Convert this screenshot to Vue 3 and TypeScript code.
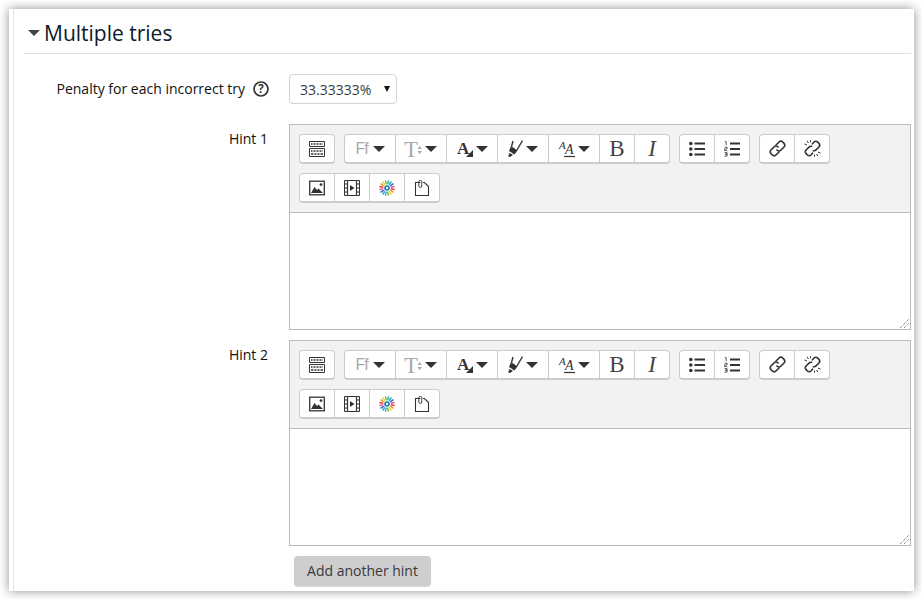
<script setup lang="ts">
const hints = [1, 2]

// toolbar rows: each group is a list of icon names
const rows: string[][][] = [
  [
    ['collapse'],
    ['font', 'size', 'color', 'marker', 'style', 'bold', 'italic'],
    ['ul', 'ol'],
    ['link', 'unlink'],
  ],
  [['image', 'video', 'burst', 'paste']],
]

const wide = ['font', 'size', 'color', 'marker', 'style']

// rays of the coloured wheel
const rayColors = ['#e8413c', '#f39c2d', '#f4d03f', '#7cc242', '#2fb7a5', '#29a9e0', '#2b6cc4', '#e85a9b']
const rays = Array.from({ length: 16 }, (_, i) => {
  const a = (i * Math.PI) / 8 + 0.2
  return {
    x1: 8 + Math.cos(a) * 3.8,
    y1: 8 + Math.sin(a) * 3.8,
    x2: 8 + Math.cos(a) * 7.8,
    y2: 8 + Math.sin(a) * 7.8,
    color: rayColors[i % rayColors.length],
  }
})
</script>

<template>
  <div class="frame">
    <div class="inner">
      <div class="section-head">
        <span class="collapse-caret"></span>
        <h3>Multiple tries</h3>
      </div>

      <div class="form-row penalty">
        <div class="label">
          <span>Penalty for each incorrect try</span>
          <svg class="help" viewBox="0 0 16 16" width="16" height="16">
            <circle cx="8" cy="8" r="7" fill="none" stroke="#333" stroke-width="1.7" />
            <text x="8" y="12.2" text-anchor="middle" font-size="11.500" font-weight="700" fill="#333" font-family="Open Sans, sans-serif">?</text>
          </svg>
        </div>
        <div class="select">
          <span>33.33333%</span>
          <i class="select-arrow"></i>
        </div>
      </div>

      <div v-for="n in hints" :key="n" class="form-row hint">
        <div class="label">Hint {{ n }}</div>
        <div class="editor">
          <div class="toolbar">
            <div v-for="(row, r) in rows" :key="r" class="tool-row">
              <div v-for="(group, g) in row" :key="g" class="tool-group">
                <div v-for="icon in group" :key="icon" class="tool" :class="{ wide: wide.includes(icon) }">
                  <svg v-if="icon === 'collapse'" viewBox="0 0 16 16" width="16" height="16">
                    <path d="M.5.5h15v5H.5zM.5 7.500h15v8H.5z" fill="none" stroke="#333" />
                    <path d="M2 2.200h12v1.600H2zM2 9.200h12v1.600H2zM2 12.200h12v1.600H2z" fill="#333" />
                    <path d="M4 2v2M7 2v2M10 2v2M13 2v2M4 9v2M7 9v2M10 9v2M13 9v2M5 12v2M8 12v2M11 12v2" stroke="#fff" />
                  </svg>
                  <span v-else-if="icon === 'font'" class="ff">Ff</span>
                  <svg v-else-if="icon === 'size'" class="free" viewBox="0 0 18 24" width="18" height="24">
                    <text x="-1" y="19.500" font-size="23" fill="#aaa" font-family="Liberation Serif, serif">T</text>
                    <path d="M12.500 12l2.200-3 2.200 3zM12.500 14l2.200 3 2.200-3z" fill="#aaa" />
                  </svg>
                  <svg v-else-if="icon === 'color'" class="free" viewBox="0 0 17 22" width="17" height="22">
                    <text x="0" y="16" font-size="17" font-weight="700" fill="#333" font-family="Liberation Serif, serif">A</text>
                    <path d="M16 12v7H9z" fill="#333" />
                  </svg>
                  <svg v-else-if="icon === 'marker'" viewBox="0 0 16 18" width="16" height="18">
                    <path d="M5 1L3.500 6.500M14.500 .5L9 10" stroke="#333" stroke-width="1.400" fill="none" />
                    <path d="M3 6l6.500 4.500-3 4-5.500-3.500z" fill="#333" />
                    <path d="M1.500 13l3.500 1.800-2.500 2H0z" fill="#333" />
                  </svg>
                  <svg v-else-if="icon === 'style'" class="free" viewBox="0 0 17 22" width="17" height="22">
                    <text x="0" y="11" font-size="11" fill="#333" font-style="italic" font-family="Liberation Serif, serif">A</text>
                    <text x="6" y="16" font-size="14" fill="#333" font-style="italic" font-family="Liberation Serif, serif">A</text>
                    <path d="M5 18.500h11" stroke="#333" stroke-width="1.200" />
                  </svg>
                  <span v-else-if="icon === 'bold'" class="letter">B</span>
                  <span v-else-if="icon === 'italic'" class="letter em">I</span>
                  <svg v-else-if="icon === 'ul'" viewBox="0 0 16 16" width="16" height="16">
                    <circle cx="1.800" cy="2.500" r="1.800" fill="#333" />
                    <circle cx="1.800" cy="8" r="1.800" fill="#333" />
                    <circle cx="1.800" cy="13.500" r="1.800" fill="#333" />
                    <path d="M5.500 2.500H16M5.500 8H16M5.500 13.500H16" stroke="#333" stroke-width="2" />
                  </svg>
                  <svg v-else-if="icon === 'ol'" viewBox="0 0 16 16" width="16" height="16">
                    <path d="M6 2.500h10M6 8h10M6 13.500h10" stroke="#333" stroke-width="2" />
                    <path d="M.8.600h1.400v3.600M.5 6.200h2.600v1.700H.6v1.700h2.600M.5 11.600h2.600v1.600H1.200h1.900v1.900H.5" stroke="#333" fill="none" stroke-width=".8" />
                  </svg>
                  <svg v-else-if="icon === 'link'" viewBox="0 0 17 17" width="17" height="17">
                    <g fill="none" stroke="#333" stroke-width="1.600" stroke-linecap="round">
                      <path d="M7 5l2.800-2.800a2.900 2.900 0 0 1 4.100 0l.9.900a2.900 2.900 0 0 1 0 4.100L12 10a2.900 2.900 0 0 1-4.100 0" />
                      <path d="M10 12l-2.800 2.800a2.900 2.900 0 0 1-4.100 0l-.9-.9a2.900 2.900 0 0 1 0-4.100L5 7a2.900 2.900 0 0 1 4.100 0" />
                    </g>
                  </svg>
                  <svg v-else-if="icon === 'unlink'" viewBox="0 0 17 17" width="17" height="17">
                    <g fill="none" stroke="#333" stroke-width="1.600" stroke-linecap="round">
                      <path d="M8.500 3.800l1.300-1.500a2.900 2.900 0 0 1 4.100 0l.8.800a2.900 2.900 0 0 1 0 4.100L12 9.900a2.900 2.900 0 0 1-2.600.8" />
                      <path d="M8.500 13.200l-1.300 1.500a2.900 2.900 0 0 1-4.100 0l-.8-.8a2.900 2.900 0 0 1 0-4.100L5 7.100a2.900 2.900 0 0 1 2.600-.8" />
                    </g>
                    <path d="M3 .8l1.500 2.200M.5 4l2.500 1M6.500 .3v2M14 16.200l-1.500-2.200M16.500 13l-2.500-1M10.500 16.700v-2" stroke="#333" stroke-width="1" />
                  </svg>
                  <svg v-else-if="icon === 'image'" viewBox="0 0 16 16" width="16" height="16">
                    <rect x=".7" y="1.200" width="14.600" height="13.600" fill="none" stroke="#333" stroke-width="1.300" />
                    <circle cx="12" cy="4.600" r="1.400" fill="#333" />
                    <path d="M2 13l3.500-6 2.500 3 1.500-1.500L14 13z" fill="#333" />
                  </svg>
                  <svg v-else-if="icon === 'video'" viewBox="0 0 16 16" width="16" height="16">
                    <path d="M.5.5h15v15H.5z" fill="none" stroke="#333" />
                    <path d="M3.500.5v15M12.500.5v15" stroke="#333" stroke-width="1.200" />
                    <path d="M.5 4h3M.5 8h3M.5 12h3M12.500 4h3M12.500 8h3M12.500 12h3" stroke="#333" stroke-width="1.200" />
                    <path d="M6 5l4.500 3L6 11z" fill="#333" />
                  </svg>
                  <svg v-else-if="icon === 'burst'" viewBox="0 0 16 16" width="16" height="16">
                    <line
                      v-for="(ray, i) in rays"
                      :key="i"
                      :x1="ray.x1"
                      :y1="ray.y1"
                      :x2="ray.x2"
                      :y2="ray.y2"
                      :stroke="ray.color"
                      stroke-width="1.500"
                    />
                    <circle cx="8" cy="8" r="2" fill="#fff" stroke="#1b75bb" stroke-width="1.600" />
                  </svg>
                  <svg v-else-if="icon === 'paste'" viewBox="0 0 16 16" width="16" height="16">
                    <path d="M6.500 2.500H1.500v13h13V6.500l-4-4H9" fill="none" stroke="#333" stroke-width="1.100" />
                    <path d="M4.800 6V1.800a1.500 1.500 0 0 1 3 0V6a1.500 1.500 0 0 1-3 0" fill="none" stroke="#333" stroke-width=".9" />
                  </svg>
                  <i v-if="wide.includes(icon)" class="caret"></i>
                </div>
              </div>
            </div>
          </div>
          <div class="edit-area">
            <svg class="grip" viewBox="0 0 9 9" width="9" height="9">
              <path d="M0 9L9 0M4 9l5-5" stroke="#666" stroke-width="1" stroke-dasharray="1 1" />
            </svg>
          </div>
        </div>
      </div>

      <div class="form-row">
        <div class="label"></div>
        <button class="add-btn">Add another hint</button>
      </div>
    </div>
  </div>
</template>

<style>
html,
body {
  margin: 0;
  background: #fff;
}
</style>

<style scoped>
.frame {
  width: 905px;
  height: 582px;
  margin: 9px 8px 8px 9px;
  padding-left: 4px;
  box-sizing: border-box;
  background: #fff;
  box-shadow: 0 0 10px rgba(0, 0, 0, 0.45);
  font-family: "Open Sans", sans-serif;
  font-size: 14px;
  color: #111;
  overflow: hidden;
}

.inner {
  height: 100%;
  box-sizing: border-box;
  border-left: 1px solid #e4e4e4;
  padding: 0 3px 0 10px;
}

.section-head {
  display: flex;
  align-items: center;
  height: 41px;
  padding-top: 3px;
  border-bottom: 1px solid #dee2e6;
}

.collapse-caret {
  width: 0;
  height: 0;
  margin: 0 4px 0 4px;
  border-left: 6px solid transparent;
  border-right: 6px solid transparent;
  border-top: 6px solid #444;
}

h3 {
  margin: 0;
  font-size: 21px;
  font-weight: 400;
  line-height: 28px;
  color: #0b1a2c;
}

.form-row {
  display: flex;
  align-items: flex-start;
}

.label {
  width: 245px;
  flex: none;
  margin-right: 20px;
  text-align: right;
  line-height: 30px;
  padding-right: 1px;
  box-sizing: border-box;
}

.penalty {
  margin-top: 20px;
  margin-bottom: 20px;
}

.penalty .label {
  display: flex;
  align-items: center;
  justify-content: flex-end;
  padding-right: 0;
}

.help {
  margin-left: 8px;
}

.select {
  display: flex;
  align-items: center;
  justify-content: space-between;
  box-sizing: border-box;
  width: 108px;
  height: 30px;
  padding: 0 6px 0 10px;
  border: 1px solid #ced4da;
  border-radius: 4px;
  color: #373a3c;
}

.select-arrow {
  width: 0;
  height: 0;
  border-left: 3px solid transparent;
  border-right: 3px solid transparent;
  border-top: 6px solid #111;
}

.hint {
  margin-bottom: 10px;
}

.editor {
  width: 622px;
  box-sizing: border-box;
  border: 1px solid #bbb;
}

.toolbar {
  background: #f2f2f2;
  padding: 9px 0 0 9px;
  border-bottom: 1px solid #bbb;
  height: 88px;
  box-sizing: border-box;
}

.tool-row {
  display: flex;
  gap: 9px;
  margin-bottom: 9px;
}

.tool-group {
  display: flex;
  height: 30px;
  box-sizing: border-box;
  background: #fff;
  border: 1px solid #ccc;
  border-bottom-width: 2px;
  border-radius: 4px;
}

.tool {
  display: flex;
  align-items: center;
  justify-content: center;
  width: 34px;
  height: 27px;
  border-right: 1px solid #ccc;
}

.tool:last-child {
  border-right: none;
}

.tool.wide {
  width: 50px;
  gap: 2px;
}

.free {
  overflow: visible;
}

.caret {
  width: 0;
  height: 0;
  border-left: 6.500px solid transparent;
  border-right: 6.500px solid transparent;
  border-top: 6px solid #333;
}

.ff {
  font-family: "Liberation Sans", sans-serif;
  font-size: 16px;
  letter-spacing: -1px;
  padding-right: 3px;
  color: #aaa;
}

.letter {
  font-family: "Liberation Serif", serif;
  font-size: 23px;
  line-height: 27px;
  color: #444;
}

.letter.em {
  font-style: italic;
}

.edit-area {
  position: relative;
  height: 116px;
  background: #fff;
}

.grip {
  position: absolute;
  right: 1px;
  bottom: 1px;
}

.add-btn {
  margin-left: 5px;
  width: 137px;
  height: 30px;
  padding: 0 0 1px;
  border: none;
  border-radius: 4px;
  background: #cecece;
  box-shadow: 0 1px 1px rgba(0, 0, 0, 0.15);
  font-family: "Open Sans", sans-serif;
  font-size: 14px;
  color: #373a3c;
}
</style>
